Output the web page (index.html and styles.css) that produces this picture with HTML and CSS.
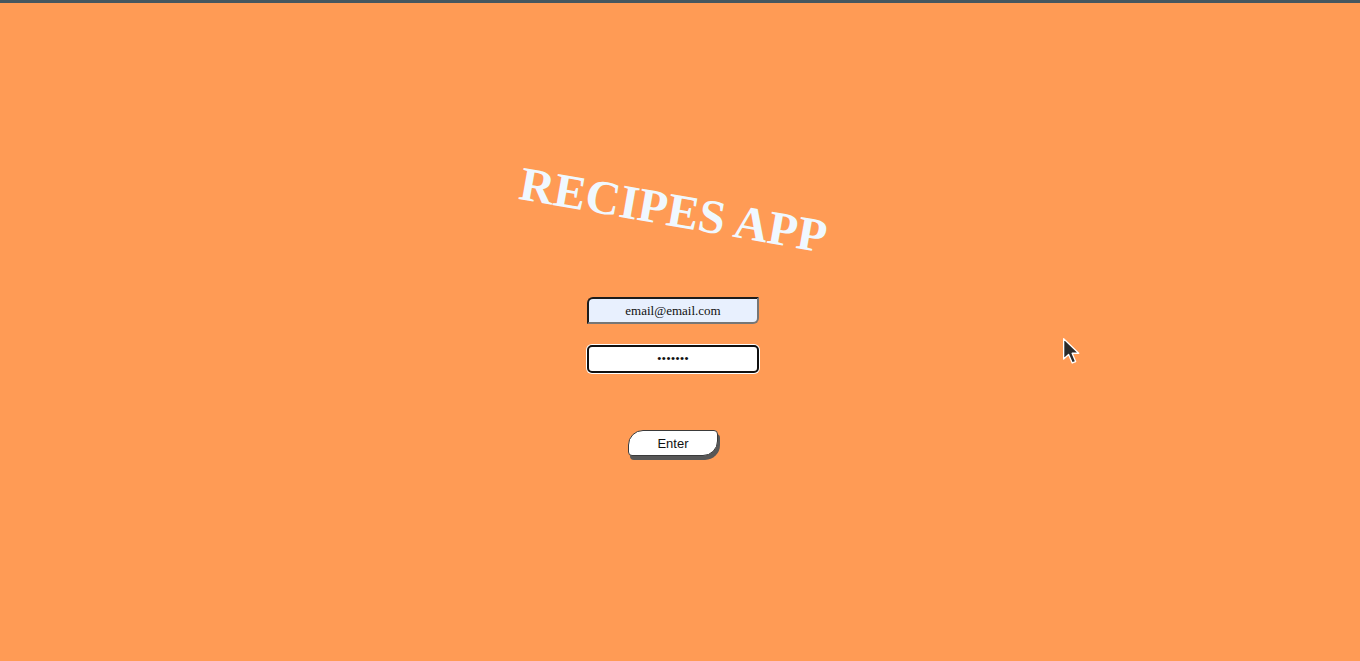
FILE: index.html
```html
<!DOCTYPE html>
<html lang="en">
<head>
<meta charset="utf-8">
<title>Recipes App</title>
<link rel="stylesheet" href="styles.css">
</head>
<body>
<main class="login">
  <h1 class="title">RECIPES APP</h1>
  <form class="form">
    <input class="field field-email" type="email" value="email@email.com">
    <input class="field field-password is-focused" type="password" value="1234567">
    <button class="enter" type="button">Enter</button>
  </form>
</main>
<svg class="cursor" width="22" height="31" viewBox="0 0 20 28" aria-hidden="true">
  <path d="M1.5 1.5 L1.5 20 L6 15.8 L9.3 23.5 L12.4 22.2 L9.2 14.7 L15.2 14.7 Z" fill="#2b2b2b" stroke="#ffffff" stroke-width="1.2" stroke-linejoin="round"/>
</svg>
</body>
</html>
```
FILE: styles.css
```css
html, body {
  margin: 0;
  padding: 0;
}

body {
  background: #ff9b55;
  border-top: 3px solid #46575f;
  min-height: 658px;
  font-family: "Liberation Serif", "Times New Roman", serif;
}

.login {
  display: flex;
  flex-direction: column;
  align-items: center;
  padding-top: 179px;
  margin-right: 14px;
}

.title {
  margin: 0;
  font-family: "Liberation Serif", "Times New Roman", serif;
  font-weight: bold;
  font-size: 48px;
  line-height: 56px;
  color: #f0f8ff;
  transform: rotate(10deg);
}

.form {
  display: flex;
  flex-direction: column;
  align-items: center;
  margin-top: 59px;
}

.field {
  box-sizing: border-box;
  width: 172px;
  height: 27px;
  padding: 0 4px;
  font-family: "Liberation Serif", "Times New Roman", serif;
  font-size: 13px;
  text-align: center;
  color: #111;
  background: #ffffff;
  border-style: solid;
  border-width: 2px;
  border-color: #1c1c1c #767676 #767676 #1c1c1c;
  outline: none;
}

.field-email {
  background: #e8f0fe;
  border-radius: 6px 0 6px 0;
}

.field-password {
  margin-top: 21px;
  height: 28px;
  border-radius: 5px;
}

.field-password.is-focused {
  border-color: #101010;
  box-shadow: 0 0 0 1px #ffffff;
}

.enter {
  box-sizing: border-box;
  margin-top: 57px;
  width: 90px;
  height: 26px;
  padding: 0;
  font-family: "Liberation Sans", Arial, sans-serif;
  font-size: 13px;
  color: #111;
  background: #ffffff;
  border: 1px solid #3a3a3a;
  border-radius: 15px 4px 15px 4px;
  box-shadow: 2px 4px 0 #575757;
  cursor: pointer;
}

.cursor {
  position: absolute;
  left: 1062px;
  top: 337px;
}
```
